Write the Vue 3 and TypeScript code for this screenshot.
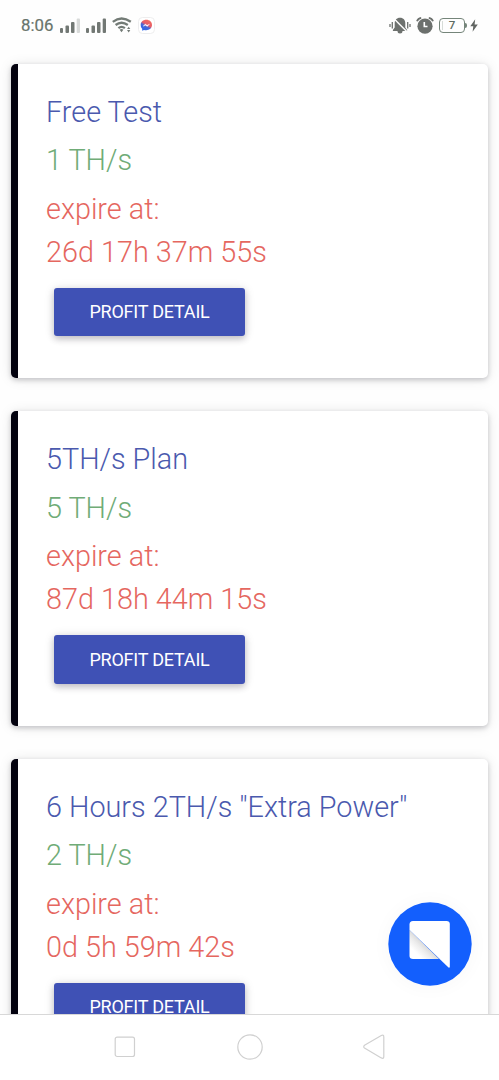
<script setup lang="ts">
interface Plan {
  title: string
  power: string
  remaining: string
}

const plans: Plan[] = [
  { title: 'Free Test', power: '1 TH/s', remaining: '26d 17h 37m 55s' },
  { title: '5TH/s Plan', power: '5 TH/s', remaining: '87d 18h 44m 15s' },
  { title: '6 Hours 2TH/s "Extra Power"', power: '2 TH/s', remaining: '0d 5h 59m 42s' },
]
</script>

<template>
  <div class="screen">
    <header class="status">
      <span class="time">8:06</span>
      <svg class="signal" width="20" height="15" viewBox="0 0 20 15" fill="#727874">
        <rect x="0" y="10" width="3" height="5" rx="1" />
        <rect x="5.5" y="7.5" width="3.5" height="7.5" rx="1" />
        <rect x="11" y="4" width="3.5" height="11" rx="1" />
        <rect x="16.7" y="0.5" width="3.3" height="14.5" rx="1" fill="#d8dad9" />
      </svg>
      <svg class="signal second" width="20" height="15" viewBox="0 0 20 15" fill="#727874">
        <rect x="0" y="10" width="3" height="5" rx="1" />
        <rect x="5.5" y="7.5" width="3.5" height="7.5" rx="1" />
        <rect x="11" y="4" width="3.5" height="11" rx="1" />
        <rect x="16.7" y="0.5" width="3.3" height="14.5" rx="1" />
      </svg>
      <svg class="wifi" width="20" height="16" viewBox="0 0 20 16" fill="none" stroke="#737b76" stroke-width="2.3">
        <path d="M.8 4.8Q9.5-1.8 18.8 4.8M3.6 8Q9.5 3.4 15.8 8M6.4 11.2Q9.5 8.6 12.9 11.2" />
        <path d="M7.6 12.7Q9.5 11.5 11.4 12.7L9.5 15.3Z" fill="#737b76" stroke="none" />
        <path d="M15 12 16.7 9.7 18.3 12ZM15 13 16.7 15.5 18.3 13Z" fill="#737b76" stroke="none" />
      </svg>
      <svg class="messenger" width="17" height="17" viewBox="0 0 17 17">
        <defs>
          <linearGradient id="chat" x1="0" y1="1" x2=".6" y2="0">
            <stop offset="0" stop-color="#2164ee" />
            <stop offset=".5" stop-color="#4868d8" />
            <stop offset=".66" stop-color="#e65b68" />
            <stop offset="1" stop-color="#f06a60" />
          </linearGradient>
        </defs>
        <rect x=".5" y=".5" width="16" height="16" rx="4" fill="#fff" stroke="#ededee" />
        <path d="M8.300 2.800C5 2.800 2.700 5 2.700 8c0 1.700.600 2.800 1.500 3.800v2l1.800-.900c4.300 1.200 8-1.200 8-4.900 0-3-2.400-5.200-5.700-5.200Z" fill="url(#chat)" />
        <path d="m5 9.300 2.300-2.200 1.800 1.200 2.500-1.200-2.300 2.400-1.800-1.200Z" fill="#fff" stroke="#fff" stroke-width=".3" />
      </svg>

      <svg class="muted" width="22" height="17" viewBox="0 0 22 17" fill="#6d716e">
        <path d="M11 .8c-3.500 0-5.300 2.400-5.300 5.500v4.200l-1.800 2.500v1h14.200v-1l-1.800-2.500V6.300C16.300 3.200 14.500.8 11 .8ZM8.500 14a2.500 2.500 0 0 0 5 0Z" />
        <path d="M1 7v3M3.300 5v6.500M18.700 5v6.500M21 7v3" stroke="#6d716e" stroke-width="1.300" />
        <path d="m4.300 1 13.700 13.800" stroke="#fff" stroke-width="1.400" />
      </svg>
      <svg class="alarm" width="18" height="17" viewBox="0 0 18 17">
        <circle cx="9" cy="9.200" r="7.600" fill="#6c706d" />
        <path d="M1 4.200Q2 1.400 5.200.9M17 4.200Q16 1.400 12.800.9" fill="none" stroke="#6c706d" stroke-width="1.800" />
        <path d="M8.300 5v4.500h3.200" fill="none" stroke="#fff" stroke-width="1.600" />
      </svg>
      <span class="battery"><span class="level">7</span></span>
      <svg class="bolt" width="8" height="13" viewBox="0 0 8 13" fill="#626663">
        <path d="M5.200.3.300 7.200h3L2.600 12.700 7.800 5.400H4.600Z" />
      </svg>
    </header>

    <main class="plans">
      <section v-for="plan in plans" :key="plan.title" class="card">
        <p class="line title">{{ plan.title }}</p>
        <p class="line power">{{ plan.power }}</p>
        <p class="line expiry">expire at:<br />{{ plan.remaining }}</p>
        <button class="detail" type="button">PROFIT DETAIL</button>
      </section>
    </main>

    <button class="chat" type="button" aria-label="Chat">
      <svg width="84" height="84" viewBox="0 0 84 84">
        <defs>
          <linearGradient id="fold" x1="37" y1="42" x2="28" y2="51" gradientUnits="userSpaceOnUse">
            <stop offset="0" stop-color="#d8d8d8" />
            <stop offset=".45" stop-color="#ededed" />
            <stop offset="1" stop-color="#fff" />
          </linearGradient>
        </defs>
        <circle cx="42" cy="42" r="41.700" fill="#135ffd" />
        <path d="M21.500 28 51 57H25Q21.500 57 21.500 54Z" fill="url(#fold)" />
        <path d="M21.500 28V22.500Q21.500 19 25 19H58.500Q61.800 19 61.800 22V65Q61.500 66 60.500 65.500Z" fill="#fff" />
      </svg>
    </button>

    <nav class="navigation">
      <svg width="22" height="22" viewBox="0 0 22 22">
        <rect x="1.200" y="1.200" width="19.300" height="19.300" rx="2" />
      </svg>
      <svg width="26" height="26" viewBox="0 0 26 26">
        <circle cx="13" cy="13" r="12.200" />
      </svg>
      <svg width="22" height="26" viewBox="0 0 22 26">
        <path d="M1.500 11.300 18.300 1.500Q20.800.3 20.800 3V22.500Q20.800 25.200 18.300 23.900L1.500 14Q0 12.700 1.500 11.300Z" />
      </svg>
    </nav>
  </div>
</template>

<style>
body {
  margin: 0;
}
</style>

<style scoped>
.screen {
  position: relative;
  display: flex;
  flex-direction: column;
  width: 499px;
  height: 1080px;
  overflow: hidden;
  background: #fefefe;
  font-family: Roboto, "Liberation Sans", sans-serif;
}

.status {
  display: flex;
  flex: none;
  align-items: center;
  box-sizing: border-box;
  height: 64px;
  padding: 0 21px 14px 21px;
}

.time {
  width: 39px;
  color: #68746b;
  font-size: 16.800px;
  line-height: 20px;
  -webkit-text-stroke: 0.200px #68746b;
}

.signal.second {
  margin-left: 6px;
}

.wifi {
  margin-left: 6px;
}

.messenger {
  margin-left: 6px;
}

.muted {
  margin-left: auto;
}

.alarm {
  margin-left: 5px;
}

.battery {
  position: relative;
  display: flex;
  align-items: center;
  justify-content: center;
  box-sizing: border-box;
  width: 26px;
  height: 15px;
  margin-left: 5px;
  border: 1.500px solid #75857a;
  border-radius: 4px;
  color: #5e6b62;
  font-size: 11.500px;
  font-weight: 500;
}

.battery::before {
  position: absolute;
  top: 2px;
  left: 2px;
  width: 1px;
  height: 9px;
  background: #d7dcd8;
  content: "";
}

.battery::after {
  position: absolute;
  top: 4px;
  right: -3px;
  width: 2px;
  height: 5px;
  border-radius: 0 2px 2px 0;
  background: #75857a;
  content: "";
}

.bolt {
  margin-left: 5px;
}

.plans {
  flex: 1;
  min-height: 0;
  margin-top: -20px;
  padding: 19.900px 11px 0;
  overflow: hidden;
}

.card {
  box-sizing: border-box;
  height: 314.200px;
  margin-bottom: 33.300px;
  padding: 26.700px 20px 0 28px;
  border-left: 7px solid #03020f;
  border-radius: 5px;
  background: #fff;
  box-shadow: 0 2px 5px rgba(20, 20, 35, 0.2), 0 1px 13px rgba(0, 0, 0, 0.1);
}

.line {
  margin: 0 0 5.300px;
  font-size: 28.800px;
  font-weight: 300;
  line-height: 43.200px;
  white-space: nowrap;
}

.title {
  color: #4a59ae;
}

.power {
  color: #70ac77;
}

.expiry {
  margin: 0;
  color: #e5675f;
}

.detail {
  display: block;
  width: 191px;
  height: 48.500px;
  margin: 13.900px 0 0 8px;
  padding: 0;
  border: 0;
  border-radius: 3px;
  background: #3f51b5;
  box-shadow: 0 3px 6px rgba(40, 30, 55, 0.22), 0 1px 11px rgba(0, 0, 0, 0.12);
  color: #fff;
  font: 400 18px / 46px Roboto, "Liberation Sans", sans-serif;
  letter-spacing: -0.210px;
  white-space: nowrap;
}

.chat {
  position: absolute;
  top: 902px;
  left: 387.700px;
  width: 84px;
  height: 84px;
  padding: 0;
  border: 0;
  border-radius: 50%;
  background: none;
  box-shadow: 0 1px 20px rgba(0, 0, 0, 0.035);
}

.chat svg {
  display: block;
}

.navigation {
  display: flex;
  flex: none;
  align-items: center;
  justify-content: space-between;
  box-sizing: border-box;
  height: 66px;
  padding: 0 114px 1px;
  border-top: 1px solid #d8d8d8;
  background: #fff;
}

.navigation svg {
  fill: none;
  stroke: #d0d0d0;
  stroke-width: 1.200;
}
</style>
